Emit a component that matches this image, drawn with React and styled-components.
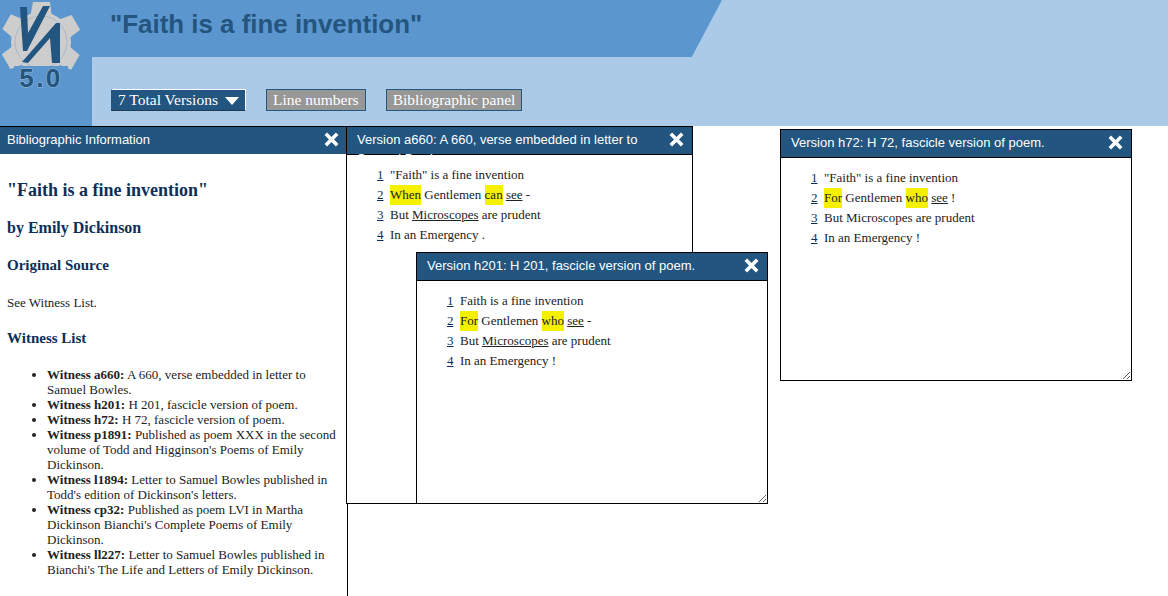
import React from "react";
import styled, { createGlobalStyle } from "styled-components";

const GlobalStyle = createGlobalStyle`
  html, body {
    margin: 0;
    padding: 0;
    background: #fff;
    overflow: hidden;
  }
  body {
    font-family: "Liberation Serif", "Times New Roman", serif;
    color: #222;
  }
`;

const Page = styled.div`
  position: relative;
  width: 1168px;
  height: 596px;
  overflow: hidden;
`;

const Banner = styled.header`
  display: flex;
  height: 126px;
  background: #abcae7;
`;

const LogoColumn = styled.div`
  width: 92px;
  flex-shrink: 0;
  background: #5b96cf;
`;

const LogoSvg = styled.svg`
  display: block;
  width: 92px;
  height: 100px;
`;

const LogoNumber = styled.text`
  font-family: "Liberation Sans", Arial, sans-serif;
  font-weight: bold;
  font-size: 26px;
  letter-spacing: 2.5px;
  fill: #22557f;
  stroke: #a9bccd;
  stroke-width: 1px;
  paint-order: stroke;
`;

const BannerMain = styled.div`
  flex: 1;
  display: flex;
  flex-direction: column;
`;

const TitleBand = styled.div`
  width: 630px;
  height: 57px;
  padding: 7px 0 0 18px;
  box-sizing: border-box;
  background: #5b96cf;
  clip-path: polygon(0 0, 100% 0, 95.2% 100%, 0 100%);
`;

const Title = styled.h1`
  margin: 0;
  font-family: "Liberation Sans", Arial, sans-serif;
  font-size: 25.9px;
  line-height: 35px;
  font-weight: bold;
  color: #23557f;
`;

const Toolbar = styled.nav`
  display: flex;
  align-items: center;
  gap: 20px;
  padding: 32px 0 0 19px;
`;

const ToolButton = styled.div`
  display: flex;
  align-items: center;
  gap: 7px;
  height: 22px;
  box-sizing: border-box;
  padding: 0 6px;
  font-size: 15.5px;
  color: #fff;
  background: ${(p) => (p.$primary ? "#22557f" : "#979797")};
  border: 1px solid #22557f;
  ${(p) => p.$primary && "border-color: #fff #fff #1f3a55 #22557f;"}
`;

const Caret = styled.span`
  width: 0;
  height: 0;
  margin-top: 2px;
  border-left: 7px solid transparent;
  border-right: 7px solid transparent;
  border-top: 8px solid #fff;
`;

const SidePanel = styled.aside`
  position: absolute;
  left: 0;
  top: 126px;
  width: 348px;
  height: 470px;
  box-sizing: border-box;
  border-top: 1px solid #000;
  border-right: 1px solid #000;
  background: #fff;
  overflow: hidden;
`;

const SideBar = styled.div`
  display: flex;
  align-items: center;
  justify-content: space-between;
  height: 27px;
  padding: 0 8px 2px 7px;
  box-sizing: border-box;
  background: #22557f;
  color: #fff;
  font-family: "Liberation Sans", Arial, sans-serif;
  font-size: 13px;
`;

const SideBody = styled.div`
  padding: 0 8px 0 7px;
  font-size: 13px;
  line-height: 15px;
`;

const WorkTitle = styled.h2`
  margin: 25px 0 0;
  font-size: 18px;
  line-height: 22px;
  color: #0b2f5a;
`;

const Author = styled.h3`
  margin: 17px 0 0;
  font-size: 16px;
  line-height: 20px;
  color: #0b2f5a;
`;

const SectionHead = styled.h4`
  margin: ${(p) => p.$gap}px 0 0;
  font-size: 15px;
  line-height: 18px;
  color: #0b2f5a;
`;

const Paragraph = styled.p`
  margin: 21px 0 0;
`;

const WitnessList = styled.ul`
  margin: 20px 0 0;
  padding: 0 0 0 40px;
`;

const Window = styled.section`
  position: absolute;
  left: ${(p) => p.$x}px;
  top: ${(p) => p.$y}px;
  width: ${(p) => p.$w}px;
  height: ${(p) => p.$h}px;
  box-sizing: border-box;
  border: 1px solid #000;
  background: #fff;
  resize: both;
  overflow: hidden;
`;

const WindowBar = styled.div`
  position: relative;
  height: 24px;
  padding: 3px 40px 0 10px;
  background: #22557f;
  border-bottom: 1px solid #000;
  color: #fff;
  font-family: "Liberation Sans", Arial, sans-serif;
  font-size: 13px;
  line-height: 19px;
`;

const CloseIcon = styled.svg`
  display: block;
  width: 15px;
  height: 15px;
  flex-shrink: 0;
`;

const WindowClose = styled.span`
  position: absolute;
  right: 8px;
  top: 5px;
`;

const Poem = styled.ol`
  list-style: none;
  margin: 0;
  padding: 10px 0 0 30px;
  font-size: 13px;
  line-height: 20px;
`;

const PoemLine = styled.li`
  display: flex;
  height: 20px;
`;

const LineNo = styled.span`
  width: 13px;
  text-decoration: underline;
  color: #0b2f5a;
`;

const Mark = styled.span`
  display: inline-block;
  height: 20px;
  background: #f5f000;
`;

const Variant = styled.span`
  text-decoration: underline;
`;

const Close = () => (
  <CloseIcon viewBox="0 0 15 15">
    <path d="M1.8 1.8 L13.2 13.2 M13.2 1.8 L1.8 13.2" stroke="#fff" strokeWidth="3.6" fill="none" />
  </CloseIcon>
);

const toothAngles = [0, 60, 120, 240, 300];

const Logo = () => (
  <LogoSvg viewBox="0 0 92 100">
    <g fill="#cdcdcd">
      <circle cx="41" cy="42" r="30" />
      {toothAngles.map((a) => (
        <polygon key={a} points="33,2 50,2 52,18 30,18" transform={`rotate(${a} 41 42)`} />
      ))}
    </g>
    <circle cx="41" cy="42" r="26" fill="none" stroke="#9fb3c6" strokeWidth="0.8" />
    <g fill="#22557f">
      <polygon points="20,7 27,7 28,33 43,6 50,6 27,51 23,51" />
      <polygon points="22,62 56,23 60,23 60,63 52,63 50,38 28,63" />
    </g>
    <rect x="14" y="66" width="54" height="24" fill="#5b96cf" />
    <LogoNumber x="41" y="87" textAnchor="middle">
      5.0
    </LogoNumber>
  </LogoSvg>
);

const witnesses = [
  ["Witness a660:", "A 660, verse embedded in letter to Samuel Bowles."],
  ["Witness h201:", "H 201, fascicle version of poem."],
  ["Witness h72:", "H 72, fascicle version of poem."],
  ["Witness p1891:", "Published as poem XXX in the second volume of Todd and Higginson's Poems of Emily Dickinson."],
  ["Witness l1894:", "Letter to Samuel Bowles published in Todd's edition of Dickinson's letters."],
  ["Witness cp32:", "Published as poem LVI in Martha Dickinson Bianchi's Complete Poems of Emily Dickinson."],
  ["Witness ll227:", "Letter to Samuel Bowles published in Bianchi's The Life and Letters of Emily Dickinson."],
];

const versions = [
  {
    id: "a660",
    title: "Version a660: A 660, verse embedded in letter to Samuel Bowles.",
    x: 346, y: 126, w: 347, h: 378,
    lines: [
      <>"Faith" is a fine invention</>,
      <><Mark>When</Mark> Gentlemen <Mark>can</Mark> <Variant>see</Variant> -</>,
      <>But <Variant>Microscopes</Variant> are prudent</>,
      <>In an Emergency .</>,
    ],
  },
  {
    id: "h201",
    title: "Version h201: H 201, fascicle version of poem.",
    x: 416, y: 252, w: 352, h: 252,
    lines: [
      <>Faith is a fine invention</>,
      <><Mark>For</Mark> Gentlemen <Mark>who</Mark> <Variant>see</Variant> -</>,
      <>But <Variant>Microscopes</Variant> are prudent</>,
      <>In an Emergency !</>,
    ],
  },
  {
    id: "h72",
    title: "Version h72: H 72, fascicle version of poem.",
    x: 780, y: 129, w: 352, h: 252,
    lines: [
      <>"Faith" is a fine invention</>,
      <><Mark>For</Mark> Gentlemen <Mark>who</Mark> <Variant>see</Variant> !</>,
      <>But Microscopes are prudent</>,
      <>In an Emergency !</>,
    ],
  },
];

export default function App() {
  return (
    <Page>
      <GlobalStyle />
      <Banner>
        <LogoColumn>
          <Logo />
        </LogoColumn>
        <BannerMain>
          <TitleBand>
            <Title>"Faith is a fine invention"</Title>
          </TitleBand>
          <Toolbar>
            <ToolButton $primary>
              7 Total Versions <Caret />
            </ToolButton>
            <ToolButton>Line numbers</ToolButton>
            <ToolButton>Bibliographic panel</ToolButton>
          </Toolbar>
        </BannerMain>
      </Banner>

      <SidePanel>
        <SideBar>
          Bibliographic Information
          <Close />
        </SideBar>
        <SideBody>
          <WorkTitle>"Faith is a fine invention"</WorkTitle>
          <Author>by Emily Dickinson</Author>
          <SectionHead $gap={18}>Original Source</SectionHead>
          <Paragraph>See Witness List.</Paragraph>
          <SectionHead $gap={19}>Witness List</SectionHead>
          <WitnessList>
            {witnesses.map(([name, text]) => (
              <li key={name}>
                <b>{name}</b> {text}
              </li>
            ))}
          </WitnessList>
        </SideBody>
      </SidePanel>

      {versions.map((v) => (
        <Window key={v.id} $x={v.x} $y={v.y} $w={v.w} $h={v.h}>
          <WindowBar>
            {v.title}
            <WindowClose>
              <Close />
            </WindowClose>
          </WindowBar>
          <Poem>
            {v.lines.map((line, i) => (
              <PoemLine key={i}>
                <LineNo>{i + 1}</LineNo>
                <span>{line}</span>
              </PoemLine>
            ))}
          </Poem>
        </Window>
      ))}
    </Page>
  );
}
